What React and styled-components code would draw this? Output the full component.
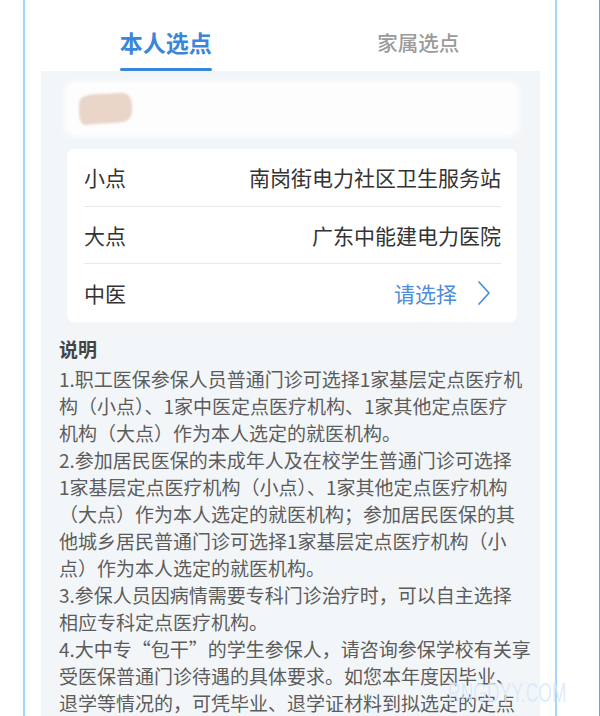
import React, { useState } from "react";
import styled, { createGlobalStyle } from "styled-components";

const GlobalStyle = createGlobalStyle`
  html, body {
    margin: 0;
    padding: 0;
    background: #ffffff;
  }
  body {
    font-family: "Noto Sans CJK SC", "Noto Sans", sans-serif;
  }
`;

const Page = styled.div`
  position: relative;
  width: 599px;
  height: 716px;
  overflow: hidden;
  border-right: 1px solid #6fa6de;
  background: #ffffff;
`;

const Frame = styled.div`
  margin-left: 23px;
  width: 530px;
  height: 716px;
  border-left: 2px solid #a9d5f8;
  border-right: 2px solid #a9d5f8;
  display: flex;
  flex-direction: column;
`;

const TabBar = styled.div`
  display: grid;
  grid-template-columns: 1fr 1fr;
  margin: 0 15px 0 16px;
  height: 72px;
`;

const Tab = styled.button`
  border: none;
  background: none;
  padding: 28px 0 0;
  margin: 0;
  display: flex;
  justify-content: center;
  align-items: flex-start;
  cursor: pointer;
  font-family: inherit;
`;

const TabLabel = styled.span`
  position: relative;
  display: inline-block;
  line-height: 28px;
  font-size: ${(p) => (p.$active ? "23px" : "20.5px")};
  font-weight: ${(p) => (p.$active ? 700 : 500)};
  color: ${(p) => (p.$active ? "#3a86da" : "#9a9a9a")};
  margin-left: ${(p) => (p.$active ? "0" : "6px")};

  &::after {
    content: "";
    display: ${(p) => (p.$active ? "block" : "none")};
    position: absolute;
    left: 0;
    right: 0;
    top: 40px;
    height: 3px;
    border-radius: 2px;
    background: #3a86da;
  }
`;

const Panel = styled.div`
  flex: 1;
  margin: 0 15px 0 16px;
  background: #f3f6f8;
  padding-top: 13px;
  display: flex;
  flex-direction: column;
`;

const Card = styled.div`
  margin: 0 23px 0 26px;
  background: #ffffff;
  border-radius: 7px;
`;

const NameCard = styled(Card)`
  height: 50px;
  display: flex;
  align-items: center;
  padding-left: 10px;
  background: #fdfdfd;
  box-shadow: 0 0 6px 2px rgba(255, 255, 255, 0.9);
`;

const RowsCard = styled(Card)`
  margin-top: 15px;
  padding: 0 16px 0 17px;
`;

const Row = styled.div`
  display: flex;
  align-items: center;
  justify-content: space-between;
  font-size: 21px;
  color: #333333;
  border-bottom: ${(p) => (p.$last ? "none" : "1px solid #e9e9e9")};
  box-sizing: border-box;
  height: ${(p) => (p.$last ? "58px" : "57.5px")};
`;

const RowLabel = styled.span`
  line-height: 28px;
`;

const RowValue = styled.span`
  display: flex;
  align-items: center;
  gap: 20px;
  line-height: 28px;
  margin-right: ${(p) => (p.$link ? "10px" : "0")};
  color: ${(p) => (p.$link ? "#4d8cd8" : "#333333")};
`;

const Notes = styled.div`
  padding: 13px 18px 0;
  font-size: 19px;
  line-height: 27px;
  color: #5c5c5c;
`;

const NotesTitle = styled.div`
  font-weight: 700;
  color: #444444;
  margin-bottom: 3px;
`;

const NoteLine = styled.div`
  white-space: nowrap;
`;

const Watermark = styled.div`
  position: absolute;
  left: 448px;
  top: 678px;
  font-family: "Liberation Sans", sans-serif;
  font-size: 27px;
  line-height: 30px;
  transform: scaleX(0.65);
  transform-origin: left center;
  color: rgba(215, 232, 250, 0.85);
  pointer-events: none;
  white-space: nowrap;
`;

const Chevron = () => (
  <svg width="14" height="26" viewBox="0 0 14 26" fill="none">
    <polyline
      points="2,2 12,13 2,24"
      stroke="#4d8cd8"
      strokeWidth="1.7"
      strokeLinecap="round"
      strokeLinejoin="round"
    />
  </svg>
);

const Blob = () => (
  <svg width="58" height="36" viewBox="0 0 58 36">
    <defs>
      <filter id="soft" x="-10%" y="-10%" width="120%" height="120%">
        <feGaussianBlur stdDeviation="0.8" />
      </filter>
    </defs>
    <path
      d="M6 6 C14 2 30 3 42 2 C50 1 55 6 55 14 C56 22 54 30 46 31 C34 33 20 32 10 34 C4 35 2 28 2 20 C2 12 2 8 6 6 Z"
      fill="#e9d6c9"
      filter="url(#soft)"
    />
  </svg>
);

const rows = [
  { label: "小点", value: "南岗街电力社区卫生服务站" },
  { label: "大点", value: "广东中能建电力医院" },
  { label: "中医", value: "请选择", link: true },
];

const lines = [
  "1.职工医保参保人员普通门诊可选择1家基层定点医疗机",
  "构（小点）、1家中医定点医疗机构、1家其他定点医疗",
  "机构（大点）作为本人选定的就医机构。",
  "2.参加居民医保的未成年人及在校学生普通门诊可选择",
  "1家基层定点医疗机构（小点）、1家其他定点医疗机构",
  "（大点）作为本人选定的就医机构；参加居民医保的其",
  "他城乡居民普通门诊可选择1家基层定点医疗机构（小",
  "点）作为本人选定的就医机构。",
  "3.参保人员因病情需要专科门诊治疗时，可以自主选择",
  "相应专科定点医疗机构。",
  "4.大中专“包干”的学生参保人，请咨询参保学校有关享",
  "受医保普通门诊待遇的具体要求。如您本年度因毕业、",
  "退学等情况的，可凭毕业、退学证材料到拟选定的定点",
];

export default function App() {
  const [tab, setTab] = useState(0);
  const tabs = ["本人选点", "家属选点"];
  return (
    <>
      <GlobalStyle />
      <Page>
        <Frame>
          <TabBar>
            {tabs.map((t, i) => (
              <Tab key={t} onClick={() => setTab(i)}>
                <TabLabel $active={tab === i}>{t}</TabLabel>
              </Tab>
            ))}
          </TabBar>
          <Panel>
            <NameCard>
              <Blob />
            </NameCard>
            <RowsCard>
              {rows.map((r, i) => (
                <Row key={r.label} $last={i === rows.length - 1}>
                  <RowLabel>{r.label}</RowLabel>
                  <RowValue $link={r.link}>
                    {r.value}
                    {r.link && <Chevron />}
                  </RowValue>
                </Row>
              ))}
            </RowsCard>
            <Notes>
              <NotesTitle>说明</NotesTitle>
              {lines.map((l, i) => (
                <NoteLine key={i}>{l}</NoteLine>
              ))}
            </Notes>
          </Panel>
        </Frame>
        <Watermark>RNGDYY.COM</Watermark>
      </Page>
    </>
  );
}
